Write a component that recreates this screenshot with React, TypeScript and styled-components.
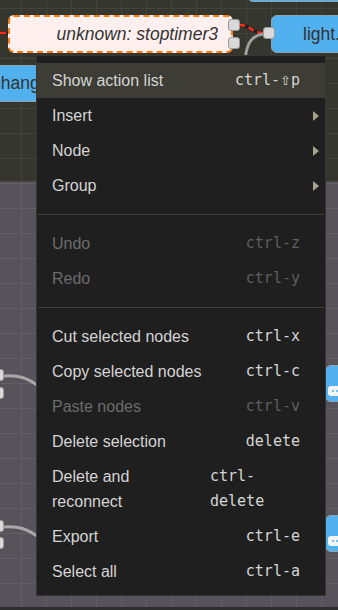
import React from "react";
import styled, { createGlobalStyle, css } from "styled-components";

const GlobalStyle = createGlobalStyle`
  html, body { margin: 0; padding: 0; background: #57535a; }
  body { font-family: "Liberation Sans", Arial, sans-serif; }
`;

const gridBg = (bg: string, line: string, offY: number) => css`
  background-color: ${bg};
  background-image: linear-gradient(to right, ${line} 1px, transparent 1px),
    linear-gradient(to bottom, ${line} 1px, transparent 1px);
  background-size: 25px 25px;
  background-position: 21px ${offY}px;
`;

const Screen = styled.div`
  position: relative;
  width: 338px;
  height: 610px;
  overflow: hidden;
  display: flex;
  flex-direction: column;
`;

const GroupZone = styled.div`
  height: 181px;
  border-bottom: 1px solid #4a4a42;
  ${gridBg("#35372f", "#42443b", 8)}
`;

const OpenZone = styled.div`
  flex: 1;
  ${gridBg("#57535a", "#625e66", 1)}
`;

const StatusBar = styled.div`
  height: 3px;
  background: #2d2d2d;
`;

const Canvas = styled.div`
  position: absolute;
  inset: 0;
`;

const Wires = styled.svg`
  position: absolute;
  left: 0;
  top: 0;
  width: 338px;
  height: 610px;
`;

type NodeProps = {
  $x: number;
  $y: number;
  $w: number;
  $h?: number;
  $variant: "blue" | "unknown";
  $padLeft?: number;
};

const FlowNode = styled.div<NodeProps>`
  position: absolute;
  left: ${(p) => p.$x}px;
  top: ${(p) => p.$y}px;
  width: ${(p) => p.$w}px;
  height: ${(p) => p.$h ?? 38}px;
  box-sizing: border-box;
  border-radius: 6px;
  display: flex;
  align-items: center;
  font-family: "Liberation Sans", Arial, sans-serif;
  font-size: 17.5px;
  color: #333333;
  ${(p) =>
    p.$variant === "unknown"
      ? css`
          background: #fff0ef;
          border: 2px dashed #ff7f0e;
          justify-content: flex-end;
          padding-right: 13px;
          font-style: italic;
        `
      : css`
          background: #50b1ee;
          border: 1px solid #8fa3b3;
          padding-left: ${p.$padLeft ?? 0}px;
        `}
`;

const NodeLabel = styled.span`
  white-space: nowrap;
  overflow: hidden;
`;

const Port = styled.div<{ $side: "left" | "right"; $top: number }>`
  position: absolute;
  ${(p) => (p.$side === "left" ? "left: -9px;" : "right: -9px;")}
  top: ${(p) => p.$top}px;
  width: 12px;
  height: 12px;
  box-sizing: border-box;
  background: #d9d9d9;
  border: 1px solid #999999;
  border-radius: 3px;
`;

const ButtonNode = styled(FlowNode)`
  align-items: flex-start;
  padding: 20px 0 0 2px;
`;

const NodeButton = styled.div`
  width: 22px;
  height: 10px;
  border-radius: 3px;
  background: #f4f4f4;
  display: flex;
  align-items: center;
  gap: 2px;
  padding-left: 4px;
  box-sizing: border-box;
`;

const Dot = styled.span`
  width: 2px;
  height: 2px;
  border-radius: 1px;
  background: #50b1ee;
`;

const Menu = styled.ul`
  position: absolute;
  left: 36px;
  top: 55px;
  width: 290px;
  box-sizing: border-box;
  margin: 0;
  padding: 7px 0 6px;
  list-style: none;
  background: #1f1f1f;
  border: 1px solid #363636;
  font-family: "Liberation Sans", Arial, sans-serif;
  font-size: 16px;
`;

const Item = styled.li<{ $active?: boolean; $disabled?: boolean }>`
  display: flex;
  align-items: flex-start;
  padding: 5px 6px 5px 15px;
  line-height: 25px;
  background: ${(p) => (p.$active ? "#3d3d35" : "transparent")};
  color: ${(p) => (p.$disabled ? "#6b6b6b" : "#d4d4d4")};
`;

const Label = styled.span`
  flex: 1 1 auto;
  min-width: 0;
  margin-right: 16px;
`;

const Key = styled.span<{ $disabled?: boolean; $width?: number }>`
  flex: none;
  margin-right: 19px;
  font-family: "DejaVu Sans Mono", "Liberation Mono", monospace;
  font-size: 15px;
  line-height: 25px;
  color: ${(p) => (p.$disabled ? "#5e5e5e" : "#d6d6d6")};
  ${(p) =>
    p.$width
      ? css`
          width: ${p.$width}px;
          white-space: normal;
        `
      : css`
          white-space: nowrap;
        `}
`;

const ShiftGlyph = styled.span`
  font-family: "DejaVu Sans", sans-serif;
  font-size: 13px;
  line-height: 1;
`;

const Caret = styled.span`
  flex: none;
  align-self: center;
  width: 0;
  height: 0;
  border-left: 6px solid #a3a38c;
  border-top: 5px solid transparent;
  border-bottom: 5px solid transparent;
`;

const Separator = styled.li`
  height: 1px;
  margin: 11px 1px;
  background: #3f3f35;
`;

type Entry =
  | { sep: true }
  | {
      sep?: false;
      label: string;
      key?: string;
      sub?: boolean;
      disabled?: boolean;
      active?: boolean;
      keyWidth?: number;
    };

const entries: Entry[] = [
  { label: "Show action list", key: "ctrl-⇧p", active: true },
  { label: "Insert", sub: true },
  { label: "Node", sub: true },
  { label: "Group", sub: true },
  { sep: true },
  { label: "Undo", key: "ctrl-z", disabled: true },
  { label: "Redo", key: "ctrl-y", disabled: true },
  { sep: true },
  { label: "Cut selected nodes", key: "ctrl-x" },
  { label: "Copy selected nodes", key: "ctrl-c" },
  { label: "Paste nodes", key: "ctrl-v", disabled: true },
  { label: "Delete selection", key: "delete" },
  { label: "Delete and reconnect", key: "ctrl-delete", keyWidth: 90 },
  { label: "Export", key: "ctrl-e" },
  { label: "Select all", key: "ctrl-a" },
];

function renderKey(k: string) {
  const i = k.indexOf("⇧");
  if (i < 0) return k;
  return (
    <>
      {k.slice(0, i)}
      <ShiftGlyph>⇧</ShiftGlyph>
      {k.slice(i + 1)}
    </>
  );
}

export default function App() {
  return (
    <>
      <GlobalStyle />
      <Screen>
        <GroupZone />
        <OpenZone />
        <StatusBar />
        <Canvas>
          <Wires viewBox="0 0 338 610">
            <path d="M0,33 L9,33" stroke="#222" strokeWidth="3.5" fill="none" />
            <path d="M0,33 L9,33" stroke="#ff2a1a" strokeWidth="2.5" strokeDasharray="6 4" fill="none" />
            <path d="M239,25 C252,25 250,33 264,33" stroke="#222" strokeWidth="3.5" fill="none" />
            <path d="M239,25 C252,25 250,33 264,33" stroke="#ff2a1a" strokeWidth="2.5" strokeDasharray="6 4" fill="none" />
            <path d="M264,34 C252,35 246,43 245,62" stroke="#a0a0a0" strokeWidth="3" fill="none" />
            <path d="M4,376 C20,375 27,378 40,387" stroke="#a8a8a8" strokeWidth="3" fill="none" />
            <path d="M4,527 C20,526 27,529 40,538" stroke="#a8a8a8" strokeWidth="3" fill="none" />
          </Wires>

          <FlowNode $variant="blue" $x={247} $y={-36} $w={100} />

          <FlowNode $variant="unknown" $x={8} $y={15} $w={225}>
            <NodeLabel>unknown: stoptimer3</NodeLabel>
            <Port $side="right" $top={2} />
            <Port $side="right" $top={20} />
          </FlowNode>

          <FlowNode $variant="blue" $x={271} $y={15} $w={100} $padLeft={31}>
            <NodeLabel>light.</NodeLabel>
            <Port $side="left" $top={11} />
          </FlowNode>

          <FlowNode $variant="blue" $x={-30} $y={65} $w={70} $h={37} $padLeft={21}>
            <NodeLabel>change</NodeLabel>
          </FlowNode>

          <FlowNode $variant="blue" $x={-100} $y={365} $w={96}>
            <Port $side="right" $top={3} />
            <Port $side="right" $top={21} />
          </FlowNode>
          <FlowNode $variant="blue" $x={-100} $y={516} $w={96}>
            <Port $side="right" $top={3} />
            <Port $side="right" $top={20} />
          </FlowNode>

          <ButtonNode $variant="blue" $x={325} $y={365} $w={60} $h={37}>
            <NodeButton>
              <Dot />
              <Dot />
              <Dot />
            </NodeButton>
          </ButtonNode>
          <ButtonNode $variant="blue" $x={325} $y={515} $w={60} $h={37}>
            <NodeButton>
              <Dot />
              <Dot />
              <Dot />
            </NodeButton>
          </ButtonNode>

          <Menu>
            {entries.map((e, i) =>
              e.sep ? (
                <Separator key={i} />
              ) : (
                <Item key={i} $active={e.active} $disabled={e.disabled}>
                  <Label>{e.label}</Label>
                  {e.key && (
                    <Key $disabled={e.disabled} $width={e.keyWidth}>
                      {renderKey(e.key)}
                    </Key>
                  )}
                  {e.sub && <Caret />}
                </Item>
              )
            )}
          </Menu>
        </Canvas>
      </Screen>
    </>
  );
}
